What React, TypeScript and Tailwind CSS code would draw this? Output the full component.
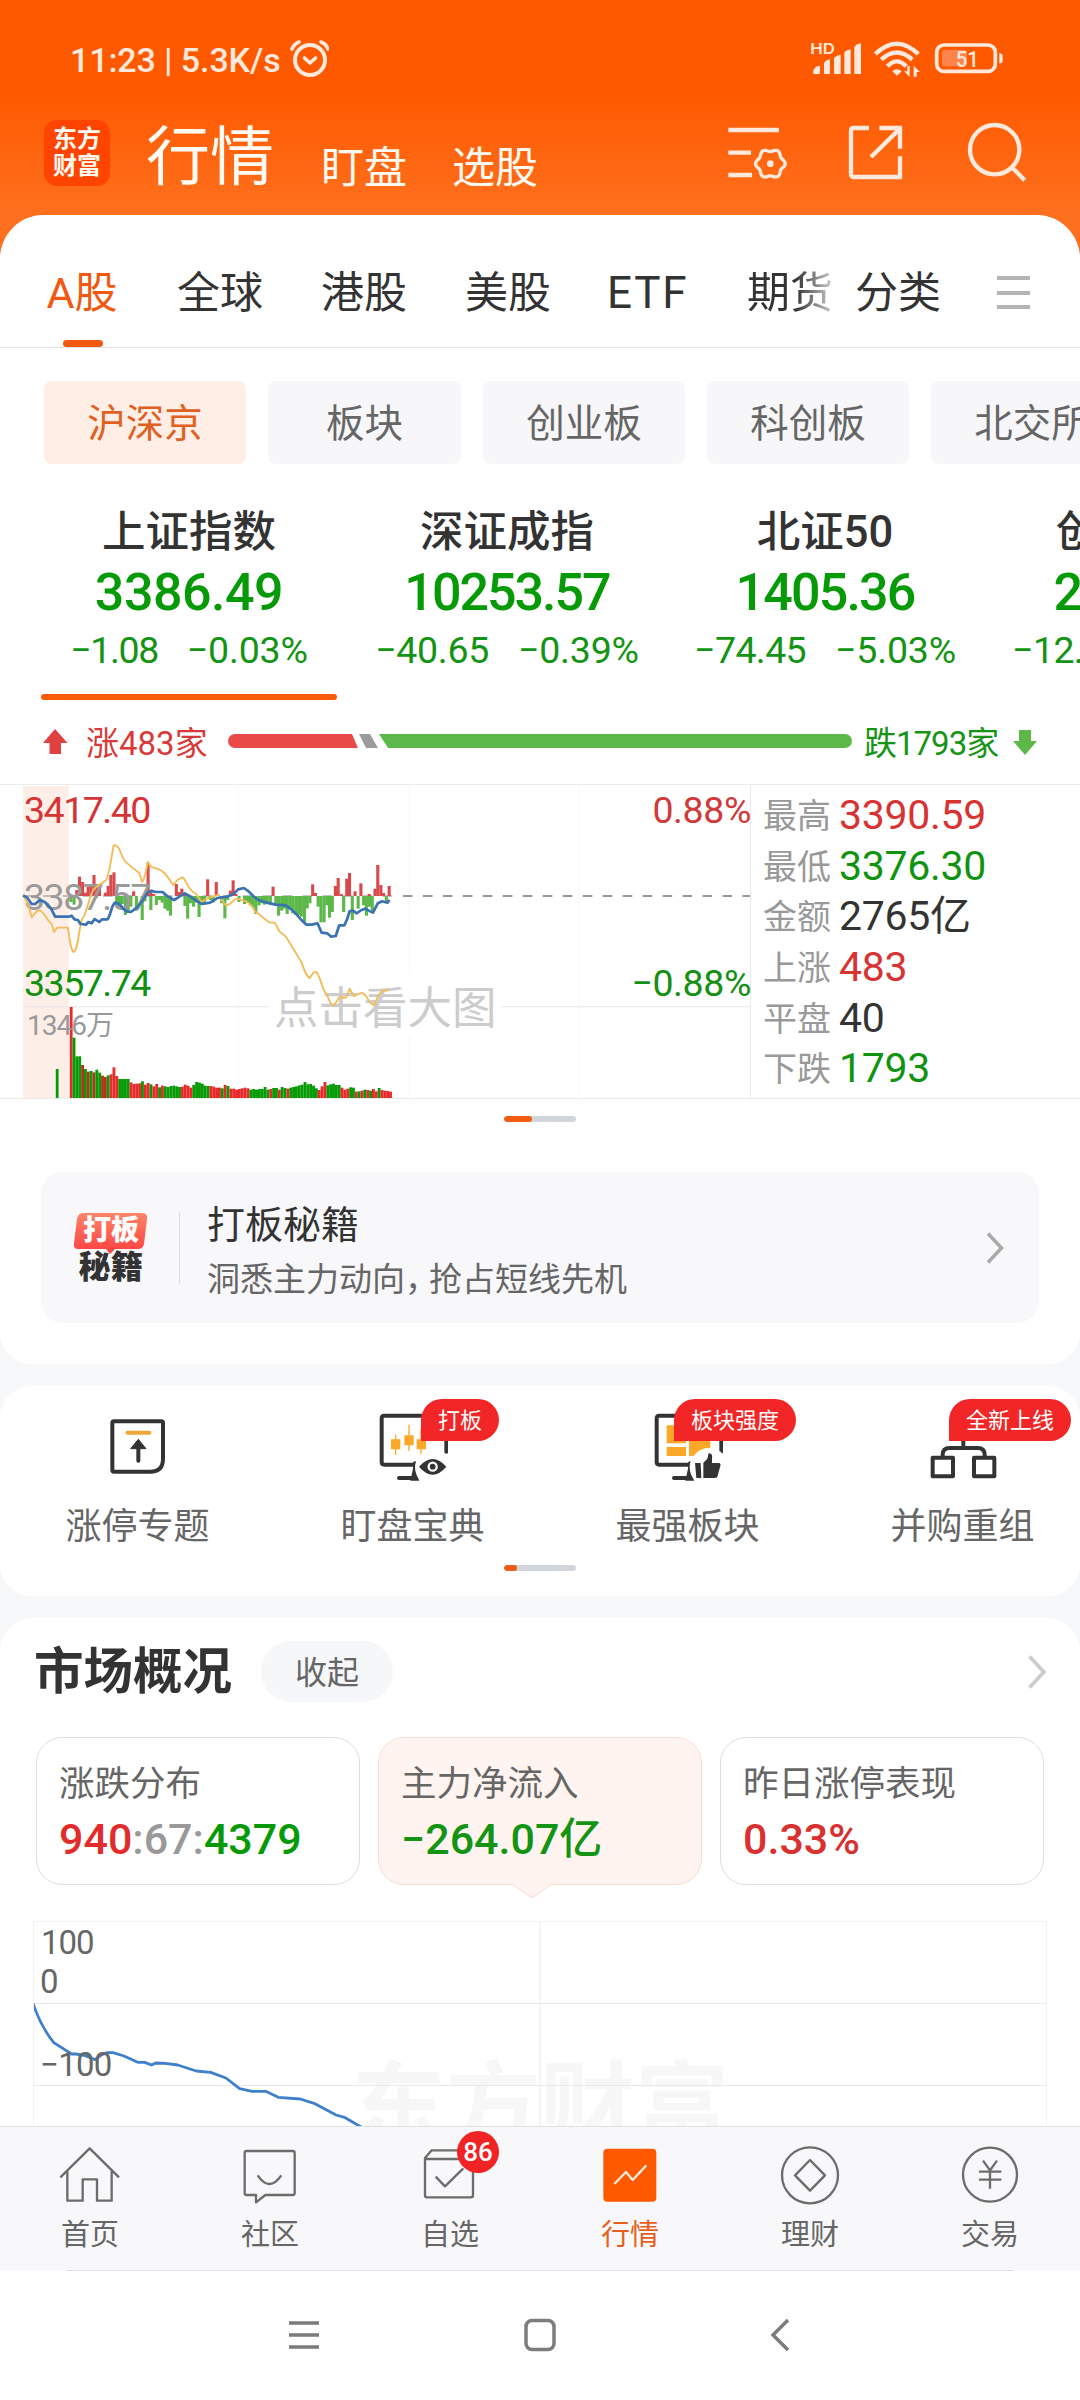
import React from 'react';

const CREAM = '#ffe9dc';

/* ---------- status bar ---------- */

function StatusBar() {
  return (
    <div className="flex h-[118px] items-start justify-between pl-[70px] pr-[74px] pt-[38px] text-[#ffe9dc]">
      <div className="flex h-[42px] items-center">
        <span className="mt-[2px] w-[217px] whitespace-nowrap text-[34px] font-medium leading-[42px] tracking-[-0.1px]">11:23 | 5.3K/s</span>
        <svg width="42" height="42" viewBox="0 0 42 42" fill="none" stroke={CREAM} strokeWidth="4" strokeLinecap="round" strokeLinejoin="round">
          <circle cx="23" cy="22" r="15" />
          <path d="M17.5 20l5.5 5 5.5-5" strokeWidth="3.6" />
          <path d="M5 11Q7 6 12 4M41 11Q39 6 34 4" strokeWidth="3.6" />
        </svg>
      </div>
      <svg className="mt-[1px]" width="196" height="40" viewBox="330 45 588 120" fill={CREAM}>
        <text x="331" y="90" fontSize="45" fontWeight="600" textLength="74" lengthAdjust="spacingAndGlyphs" fontFamily="Inter, sans-serif">HD</text>
        <path d="M340 150v-12l8-10 12-3v25zM372 150v-34l8-7 10-3v44zM402 150v-48l9-7 11-3v58zM433 150v-65l8-6 11-3v74zM463 150v-82l8-7 12-3v92z" />
        <g fill="none" stroke={CREAM} strokeWidth="13">
          <path d="M526 90Q590 28 655 90" />
          <path d="M544 107Q590 64 637 107" />
          <path d="M562 127Q590 97 619 127" />
        </g>
        <path d="M577 142q13-12 28 0l-14 13z" />
        <path d="M627 128v26l-10-10h7v-16zM643 156v-26l12 12h-7v14z" stroke={CREAM} strokeWidth="4" />
        <rect x="710" y="63" width="176" height="79" rx="22" fill="none" stroke={CREAM} strokeWidth="11" />
        <rect x="726" y="78" width="75" height="49" rx="8" fill="#ff834a" />
        <path d="M898 88q10 0 10 8v14q0 8-10 8z" />
        <text x="767" y="128" fontSize="67" fontWeight="500" textLength="70" lengthAdjust="spacingAndGlyphs" fontFamily="Roboto, sans-serif">51</text>
      </svg>
    </div>
  );
}

/* ---------- title bar ---------- */

// six-lobed outline of the settings gear
const GEAR = Array.from({ length: 72 }, (_, i) => {
  const a = (i * Math.PI) / 36;
  const r = 40.5 + 4 * Math.cos(6 * a);
  return `${i ? 'L' : 'M'}${(211 + r * Math.cos(a)).toFixed(1)} ${(416 + r * Math.sin(a)).toFixed(1)}`;
}).join('');

function TitleBar() {
  return (
    <div className="flex h-[97px] items-start pl-[44px] text-[#fffaf2]">
      <div className="mt-[2px] flex h-[66px] w-[66px] flex-col items-center justify-center rounded-[13px] bg-[#ff4400] text-[24px] font-bold leading-[27px]">
        <span className="h-[27px]">东方</span>
        <span className="h-[27px]">财富</span>
      </div>
      <span className="ml-[36px] w-[175px] whitespace-nowrap text-[64px] leading-[80px]">行情</span>
      <span className="mt-[20px] w-[131px] whitespace-nowrap text-[43px] leading-[60px]">盯盘</span>
      <span className="mt-[20px] whitespace-nowrap text-[43px] leading-[60px]">选股</span>
      <svg className="ml-auto mr-[40px]" width="320" height="70" viewBox="60 279 960 210" fill="none" stroke={CREAM} strokeWidth="13">
        <path d="M85 315H237M85 383H153M85 450H156" />
        <path d={GEAR + 'Z'} strokeWidth="10" />
        <circle cx="211" cy="416" r="10" fill={CREAM} stroke="none" />
        <path d="M507 309H461Q453 309 453 317V448Q453 456 461 456H600V394M538 309H600V371M513 396L600 311" />
        <circle cx="884" cy="374" r="74" />
        <path d="M936 427L974 466" />
      </svg>
    </div>
  );
}

/* ---------- tabs ---------- */

function MarketTabs() {
  return (
    <div className="flex h-[133px] border-b border-[#e2e2e2] pl-[45px] text-[43px] leading-[60px] text-[#333]">
      <div className="flex w-[132px] flex-col pt-[48px]">
        <span className="w-[74px] text-center text-[#f0590f]">A股</span>
        <span className="ml-[18px] mt-[17px] h-[7px] w-[40px] rounded-full bg-[#f0590f]" />
      </div>
      <span className="w-[144px] pt-[48px]">全球</span>
      <span className="w-[144px] pt-[48px]">港股</span>
      <span className="w-[142px] pt-[48px]">美股</span>
      <span className="w-[140px] pt-[48px] text-[44px] tracking-[1.8px]">ETF</span>
      <span className="w-[108px] bg-[linear-gradient(90deg,#333_45%,#fff_90%)] bg-clip-text pt-[48px] text-transparent">期货</span>
      <span className="w-[142px] pt-[48px]">分类</span>
      <div className="mt-[61px] flex h-[33px] w-[33px] flex-col justify-between">
        <span className="h-[4px] bg-[#b5b5b5]" />
        <span className="h-[4px] bg-[#b5b5b5]" />
        <span className="h-[4px] bg-[#b5b5b5]" />
      </div>
    </div>
  );
}

function Chips() {
  const base = 'flex h-[83px] shrink-0 items-center justify-center rounded-[8px] pt-[4px] text-[38.5px] leading-none';
  return (
    <div className="mt-[33px] flex gap-[22px] overflow-hidden pl-[44px]">
      <span className={base + ' w-[202px] bg-[#ffeee5] text-[#e0601f]'}>沪深京</span>
      <span className={base + ' w-[193px] bg-[#f7f7fa] text-[#666]'}>板块</span>
      <span className={base + ' w-[202px] bg-[#f7f7fa] text-[#666]'}>创业板</span>
      <span className={base + ' w-[202px] bg-[#f7f7fa] text-[#666]'}>科创板</span>
      <span className={base + ' w-[202px] bg-[#f7f7fa] text-[#666]'}>北交所</span>
    </div>
  );
}

/* ---------- index quotes ---------- */

const INDICES = [
  { name: '上证指数', price: '3386.49', diff: '−1.08', pct: '−0.03%', fit: 'tracking-[-0.5px]', diffFit: 'tracking-[-1.4px]' },
  { name: '深证成指', price: '10253.57', diff: '−40.65', pct: '−0.39%', fit: 'tracking-[-2px]', diffFit: 'tracking-[-0.3px]' },
  { name: '北证50', price: '1405.36', diff: '−74.45', pct: '−5.03%', fit: 'tracking-[-1.8px]', diffFit: 'tracking-[-0.6px]' },
  { name: '创业板指', price: '2034.16', diff: '−12.45', pct: '−0.60%', fit: 'tracking-[-1.8px]', diffFit: 'tracking-[-0.6px]' },
];

function Quotes() {
  return (
    <div className="flex h-[236px] overflow-hidden pl-[30px] pt-[42px]">
      {INDICES.map((q, i) => (
        <div key={q.name} className="flex w-[318px] shrink-0 flex-col items-center whitespace-nowrap">
          <span className="flex h-[53px] items-center text-[43.5px] font-medium leading-none text-[#333]">{q.name}</span>
          <span className={'flex h-[67px] items-center text-[52px] font-medium leading-none text-[#069a06] ' + q.fit}>{q.price}</span>
          <span className="flex h-[50px] items-center gap-[29px] text-[37.5px] leading-none text-[#149414]">
            <span className={q.diffFit}>{q.diff}</span>
            <span className="tracking-[-0.2px]">{q.pct}</span>
          </span>
          {i === 0 && <span className="mt-[18px] h-[6px] w-[296px] rounded-full bg-[#fa5a0a]" />}
        </div>
      ))}
    </div>
  );
}

function Breadth() {
  return (
    <div className="flex h-[84px] items-center text-[33px] leading-none">
      <svg className="ml-[42px]" width="26" height="26" viewBox="0 0 26 26" fill="#e04040">
        <path d="M13 0L25.500 14H19V25H7.500V14H1z" />
      </svg>
      <span className="ml-[18px] mt-[2px] w-[142px] whitespace-nowrap text-[#d83a3a]">涨483家</span>
      <svg className="-mt-[2px]" width="625" height="14" viewBox="0 0 625 14">
        <path d="M7 0H124L130 14H7A7 7 0 0 1 7 0z" fill="#e84a4a" />
        <path d="M131 0H142L150 14H138z" fill="#9b9b9b" />
        <path d="M151 0H617A7 7 0 0 1 617 14H160z" fill="#5cb848" />
      </svg>
      <span className="ml-[11px] mt-[2px] w-[148px] whitespace-nowrap tracking-[-1px] text-[#169416]">跌1793家</span>
      <svg width="26" height="26" viewBox="0 0 26 26" fill="#5cb848">
        <path d="M13 26L25 12H19V1H7V12H1z" />
      </svg>
    </div>
  );
}

/* ---------- intraday chart ---------- */

// [x, y] of each momentum bar's tip; the base line is y = 408
const UP_BARS: number[][] = [
  [223, 390], [231, 350], [240, 366], [248, 398], [256, 380], [264, 378], [273, 345], [281, 375], [289, 385],
  [306, 398], [314, 378], [322, 345], [331, 337], [388, 394], [430, 308], [438, 396], [446, 402], [512, 372], [520, 396], [528, 386],
  [537, 398], [603, 358], [628, 366], [669, 392], [677, 361], [685, 402], [793, 380], [908, 373], [916, 399],
  [974, 378], [982, 354], [991, 402], [1007, 356], [1015, 339], [1031, 394], [1048, 370], [1072, 402], [1089, 386],
  [1097, 315], [1106, 375], [1114, 399], [1130, 378],
];
const DOWN_BARS: number[][] = [
  [206, 426], [215, 434], [280, 414], [339, 436], [347, 440], [355, 432], [364, 465], [372, 458], [380, 440], [396, 452],
  [413, 480], [421, 424], [438, 450], [454, 435], [463, 420], [471, 428], [479, 446], [487, 452], [495, 467], [537, 438],
  [545, 476], [553, 430], [562, 440], [570, 428], [578, 471], [586, 430], [594, 434], [611, 420], [619, 428], [644, 430], [653, 475],
  [661, 420], [694, 426], [710, 432], [719, 426], [727, 436], [735, 442], [743, 462], [752, 436], [760, 430], [768, 434],
  [776, 430], [785, 434], [801, 436], [809, 467], [818, 452], [826, 446], [834, 462], [842, 446], [850, 460],
  [859, 465], [867, 465], [875, 470], [884, 487], [892, 445], [900, 430], [924, 440], [932, 487], [941, 487],
  [949, 436], [957, 473], [965, 456], [998, 456], [1023, 480], [1040, 446], [1056, 436], [1064, 467], [1073, 440],
  [1081, 458], [1122, 424],
];

const VOLUME_TOPS = [
  741, 833, 889, 889, 915, 927, 935, 933, 937, 929, 938, 947, 951, 946, 943, 922, 948, 957, 957, 957, 957, 967, 972, 971, 970,
  964, 974, 969, 973, 979, 972, 982, 977, 979, 981, 978, 977, 979, 981, 980, 974, 977, 983, 975, 966, 968, 971, 977, 978,
  978, 980, 983, 983, 985, 975, 978, 986, 986, 989, 987, 985, 983, 985, 989, 987, 989, 987, 987, 981, 989, 987, 984, 984,
  989, 981, 984, 986, 983, 981, 979, 976, 974, 966, 973, 972, 977, 985, 990, 979, 966, 976, 973, 971, 975, 975,
  983, 989, 986, 982, 983, 995, 994, 992, 989, 990, 992, 987, 994, 984, 990, 992, 993, 995,
];
const VOLUME_COLORS = 'RGGGRGRGRGGRRGRRRGGGGRRRRGRRGRRGRGGGGGGRRRRGGGGGGRRRRGRGRRRRRRRGGGGGGGRGGRGGRGGGGGGGGGGRRRGGGGGRRRGGRGRGRGRRGRRRR';

function IntradayChart() {
  return (
    <div className="relative h-full w-[751px] shrink-0 border-r border-[#e9e9e9]">
      <svg className="block" width="750" height="313" viewBox="0 0 750 313">
        <g transform="translate(0,-25) scale(.34437,.33333)">
          <rect x="67" y="78" width="133" height="937" fill="#feeee8" />
          <g stroke="#e6e6e6" strokeWidth="2.500" strokeDasharray="3 5">
            <path d="M692 78V1014M1189 78V645M1189 830V1014M1682 78V1014" />
          </g>
          <path d="M67 740H780M1456 740H2178" stroke="#e8e8e8" strokeWidth="3" />
          <path d="M67 408H1140" stroke="#888" strokeWidth="3" strokeDasharray="28 30" />
          <path d="M1170 408H2178" stroke="#777" strokeWidth="5" strokeDasharray="28 30" />
          {UP_BARS.map(([x, y], i) => (
            <rect key={i} x={x - 4.5} y={y} width="9" height={408 - y} fill="#d9494c" />
          ))}
          {DOWN_BARS.map(([x, y], i) => (
            <rect key={i} x={x - 4.5} y={408} width="9" height={y - 408} fill="#5cb848" />
          ))}
          <rect x="162" y="927" width="8" height="88" fill="#069a06" />
          {VOLUME_TOPS.map((y, i) => (
            <rect key={i} x={202.5 + i * 8.28} y={y} width="8.300" height={1015 - y} fill={VOLUME_COLORS[i] === 'G' ? '#069a06' : i < 14 && i > 0 ? '#b8321a' : '#e82a2a'} />
          ))}
        </g>
      </svg>
      <span className="absolute left-[274px] top-[191px] whitespace-nowrap text-[44.500px] leading-[66px] text-[#cccccc]">点击看大图</span>
      <span className="absolute left-[24px] top-[90px] text-[37.500px] leading-[44px] tracking-[-1.5px] text-[#9a9a9a]">3387.57</span>
      <span className="absolute left-[27px] top-[221px] whitespace-nowrap text-[28px] leading-[40px] tracking-[-1px] text-[#999]">1346万</span>
      <svg className="absolute left-0 top-0" width="750" height="313" viewBox="0 0 750 313" fill="none" strokeLinejoin="round">
        <g transform="translate(0,-25) scale(.34437,.33333)">
          <path stroke="#f2bc58" strokeWidth="5.500" d="M67 406C78 420 86 446 92 472C100 466 104 446 118 452C130 462 142 488 150 492L157 516L166 503H197C203 540 205 572 214 576C226 574 230 500 238 478C250 468 262 400 270 392C280 375 300 370 306 362C318 352 326 270 330 256C352 252 350 300 370 310C386 326 392 330 404 338L413 366C418 364 424 330 430 306L438 320L455 326C475 330 488 352 503 375L515 360L530 352C540 356 545 392 570 402L585 426L600 416L635 404L655 436C670 438 676 416 690 416C715 422 730 430 741 455C760 466 772 484 785 488L798 488L812 515L830 530C850 562 862 584 875 606C885 632 890 652 900 654C908 640 914 630 922 640C936 668 936 694 950 704C956 724 960 734 967 736C980 730 982 708 990 710C1004 720 1008 712 1015 686L1028 708L1052 698L1064 710C1074 730 1080 736 1087 735C1096 712 1100 700 1110 693L1130 690" />
          <path stroke="#3a72b4" strokeWidth="8" d="M67 406L78 412L92 432L102 432L116 420L130 426L148 445L160 470H200L208 467L216 478L226 480L234 492L250 494L256 486L266 490L275 477L288 486L296 478L312 478C322 466 324 432 334 428C342 430 350 430 357 446L368 454L380 456L398 442L414 422L428 398L440 392L452 396H472L488 410L505 420L515 414L536 400L550 408L565 418L585 432L610 428L632 414L660 410L680 400L692 388L708 384L722 394L735 408L750 420L775 428L800 434L830 436L846 448L860 462L875 480L890 494L905 494L922 490L934 518L950 520L962 530L975 528L985 496L1000 496L1008 478L1015 454L1025 452L1035 460L1050 450L1060 446L1075 454L1083 458L1097 430L1110 424L1125 428L1131 420" />
        </g>
      </svg>
      <span className="absolute left-[24px] top-[3px] text-[37.500px] leading-[44px] tracking-[-1.5px] text-[#d63434]">3417.40</span>
      <span className="absolute left-[24px] top-[176px] text-[37.500px] leading-[44px] tracking-[-1.5px] text-[#109010]">3357.74</span>
      <span className="absolute right-[-1px] top-[3px] text-[37.500px] leading-[44px] tracking-[-0.4px] text-[#d03a3a]">0.88%</span>
      <span className="absolute right-[-1px] top-[176px] text-[37.500px] leading-[44px] tracking-[-0.4px] text-[#168f16]">−0.88%</span>
    </div>
  );
}

const STATS = [
  { label: '最高', value: '3390.59', color: 'text-[#d83232]' },
  { label: '最低', value: '3376.30', color: 'text-[#109410]' },
  { label: '金额', value: '2765亿', color: 'text-[#333]' },
  { label: '上涨', value: '483', color: 'text-[#d83232]' },
  { label: '平盘', value: '40', color: 'text-[#333]' },
  { label: '下跌', value: '1793', color: 'text-[#109410]' },
];

function Pager({ active }: { active: string }) {
  return (
    <div className="mx-auto h-[6px] w-[72px] overflow-hidden rounded-full bg-[#d2d6da]">
      <div className={'h-full rounded-full bg-[#f25c12] ' + active} />
    </div>
  );
}

function Chevron({ className, color }: { className: string; color: string }) {
  return (
    <svg className={className} viewBox="0 0 18 32" fill="none" stroke={color} strokeWidth="3.500">
      <path d="M2 1.500L15.500 16L2 30.500" />
    </svg>
  );
}

function Promo() {
  return (
    <div className="mx-[41px] mt-[50px] flex h-[151px] items-center rounded-[22px] bg-[#f8f8fa] pl-[31px] pr-[35px]">
      <div className="relative flex h-[76px] w-[78px] flex-col items-center">
        <svg className="absolute left-0 top-0" width="78" height="46" viewBox="0 0 78 46">
          <defs>
            <linearGradient id="promo" x1="0" y1="0" x2="0" y2="1">
              <stop offset="0" stopColor="#fb8568" />
              <stop offset="1" stopColor="#fc3f40" />
            </linearGradient>
          </defs>
          <path d="M11 3H70Q76 3 75 9L72 34Q71 39 66 39H43L38 44L34 39H6Q1 39 2 33L5 9Q6 3 11 3z" fill="url(#promo)" />
        </svg>
        <span className="relative mt-[4px] h-[35px] text-[28px] font-black leading-[33px] text-white">打板</span>
        <span className="relative h-[34px] text-[32px] font-black leading-[37px] tracking-[0.5px] text-[#333]">秘籍</span>
      </div>
      <span className="ml-[29px] h-[72px] w-px bg-[#dcdcde]" />
      <div className="ml-[27px] flex flex-1 flex-col whitespace-nowrap pt-[10px]">
        <span className="text-[38px] leading-[54px] text-[#333]">打板秘籍</span>
        <span className="text-[33px] leading-[56px] text-[#666]">洞悉主力动向<span className="tracking-[-9px]">，</span>抢占短线先机</span>
      </div>
      <Chevron className="h-[32px] w-[18px]" color="#aaaaaa" />
    </div>
  );
}

/* ---------- shortcuts ---------- */

const DARK = '#333';
const AMBER = '#fba728';

function LimitUpIcon() {
  return (
    <svg width="70" height="70" viewBox="295 102 210 210" fill="none" stroke={DARK} strokeWidth="12">
      <path d="M328 127H470Q475 127 475 132V240Q475 278 437 278H328Q323 278 323 273V132Q323 127 328 127z" />
      <path d="M368 161H434" stroke="#eea83a" strokeLinecap="round" />
      <path d="M401 245V195" strokeLinecap="round" />
      <path d="M401 181L424 209H378z" fill={DARK} strokeWidth="3" strokeLinejoin="round" />
    </svg>
  );
}

function WatchIcon() {
  return (
    <svg width="70" height="70" viewBox="1093 99 210 210" fill="none" stroke={DARK} strokeWidth="12">
      <path d="M1204 254H1112Q1104 254 1104 246V115Q1104 107 1112 107H1290Q1298 107 1298 115V215M1204 250V294H1156" strokeLinecap="round" />
      <path d="M1199 262L1217 302H1190z" fill={DARK} stroke="none" />
      <path d="M1146 164V224M1186 134V213M1222 146V229" stroke={AMBER} strokeWidth="4" />
      <path d="M1132 178h28v30h-28zM1172 166h28v30h-28zM1209 178h28v30h-28z" fill={AMBER} stroke="none" />
      <circle cx="1258" cy="262" r="54" fill="#fff" stroke="none" />
      <path d="M1216 260Q1257 214 1298 260Q1257 308 1216 260z" fill={DARK} stroke="none" />
      <circle cx="1257" cy="260" r="12" stroke="#fff" strokeWidth="7" fill={DARK} />
    </svg>
  );
}

function SectorIcon() {
  return (
    <svg width="70" height="70" viewBox="323 99 210 210" fill="none" stroke={DARK} strokeWidth="12">
      <path d="M434 254H342Q334 254 334 246V115Q334 107 342 107H520Q528 107 528 115V215M434 250V294H386" strokeLinecap="round" />
      <path d="M429 262L447 302H420z" fill={DARK} stroke="none" />
      <path d="M364 136h58v54h-58zM364 201h58v27h-58zM431 136h64v92h-64z" fill={AMBER} stroke="none" />
      <circle cx="491" cy="262" r="58" fill="#fff" stroke="none" />
      <path d="M449 249H466L468 294H453zM474 248L486 236L490 220Q503 218 500 238V249H520Q527 249 525 258L516 290Q515 294 508 294H474z" fill={DARK} stroke="none" />
    </svg>
  );
}

function MergeIcon() {
  return (
    <svg width="70" height="70" viewBox="1125 99 210 210" fill="none" stroke={DARK} strokeWidth="12">
      <path d="M1139 233h61v56h-61zM1263 233h61v56h-61z" strokeLinejoin="round" />
      <path d="M1169 232V224Q1169 204 1190 204H1274Q1295 204 1295 224V232M1231 180V204" />
    </svg>
  );
}

const SHORTCUTS = [
  { label: '涨停专题', badge: '', Icon: LimitUpIcon, badgeBox: '' },
  { label: '盯盘宝典', badge: '打板', Icon: WatchIcon, badgeBox: 'left-[146px] w-[78px]' },
  { label: '最强板块', badge: '板块强度', Icon: SectorIcon, badgeBox: 'left-[124px] w-[122px]' },
  { label: '并购重组', badge: '全新上线', Icon: MergeIcon, badgeBox: 'left-[124px] w-[122px]' },
];

function Shortcuts() {
  return (
    <div className="mt-[22px] h-[210px] shrink-0 overflow-hidden rounded-[32px] bg-white pt-[27px]">
      <div className="flex">
        {SHORTCUTS.map(({ label, badge, Icon, badgeBox }) => (
          <div key={label} className="relative flex w-[275px] shrink-0 flex-col items-center">
            <Icon />
            <span className="mt-[17px] text-[36px] leading-[54px] text-[#666]">{label}</span>
            {badge && (
              <span className={'absolute top-[-14px] h-[42px] rounded-[21px] rounded-bl-none bg-[#f22626] text-center text-[22px] leading-[43px] text-white ' + badgeBox}>
                {badge}
              </span>
            )}
          </div>
        ))}
      </div>
      <div className="mt-[11px]">
        <Pager active="w-[13px]" />
      </div>
    </div>
  );
}

/* ---------- market overview ---------- */

function Overview() {
  return (
    <div className="relative mt-[22px] flex flex-1 flex-col overflow-hidden rounded-t-[34px] bg-white">
      <div className="flex h-[107px] items-center pl-[34px] pr-[33px]">
        <span className="w-[227px] whitespace-nowrap pt-[3px] text-[49.500px] font-bold leading-none text-[#333]">市场概况</span>
        <span className="flex h-[61px] w-[132px] items-center justify-center rounded-full bg-[#f6f7f9] pt-[2px] text-[32px] leading-none text-[#666]">收起</span>
        <Chevron className="ml-auto h-[34px] w-[20px]" color="#cccccc" />
      </div>
      <div className="mt-[12px] flex gap-[18px] pl-[36px]">
        <div className="flex h-[148px] w-[324px] flex-col rounded-[26px] border border-[#dfdfdf] pl-[22px] pt-[19px]">
          <span className="text-[35.500px] leading-[54px] text-[#666]">涨跌分布</span>
          <span className="text-[43px] font-medium leading-[56px] text-[#069a06]">
            <span className="text-[#e22c2c]">940</span>
            <span className="text-[#999]">:67:</span>4379
          </span>
        </div>
        <div className="relative flex h-[148px] w-[324px] flex-col rounded-[26px] border border-[#f9ddcf] bg-[#fff4ef] pl-[22px] pt-[19px]">
          <span className="text-[35.500px] leading-[54px] text-[#666]">主力净流入</span>
          <span className="text-[43px] font-medium leading-[56px] text-[#149414]">−264.07亿</span>
          <svg className="absolute left-[133px] top-[144px]" width="40" height="18" viewBox="0 0 40 18">
            <path d="M1 1.500L17 14Q20 16.500 23 14L39 1.500V0H1z" fill="#fff4ef" />
            <path d="M1 2.500L17 14Q20 16.500 23 14L39 2.500" fill="none" stroke="#f9ddcf" strokeWidth="1" />
          </svg>
        </div>
        <div className="flex h-[148px] w-[324px] flex-col rounded-[26px] border border-[#dfdfdf] pl-[22px] pt-[19px]">
          <span className="text-[35.500px] leading-[54px] text-[#666]">昨日涨停表现</span>
          <span className="text-[43px] font-medium leading-[56px] text-[#d93030]">0.33%</span>
        </div>
      </div>
      <div className="relative ml-[33px] mt-[36px] h-[205px] w-[1014px] shrink-0 overflow-hidden border-x border-t border-[#f2f2f2]">
        <span className="absolute left-[317px] top-[127px] whitespace-nowrap text-[95px] font-bold leading-[120px] tracking-[-0.5px] text-[#f7f7f7]">东方财富</span>
        <svg className="absolute left-[-1px] top-[-1px]" width="1014" height="205" viewBox="0 0 1014 205" fill="none">
          <path d="M507 0V205" stroke="#f5f5f5" strokeWidth="2" />
          <path d="M0 82.500H1014M0 164.500H1014" stroke="#e9e9e9" strokeWidth="1" />
          <g transform="translate(-33,-21) scale(.6887,.33333)">
            <path vectorEffect="non-scaling-stroke" stroke="#3f80cc" strokeWidth="2.800" strokeLinejoin="round" d="M48 310Q58 375 78 428L104 462H110L124 467L138 479L148 464L156 458H164L180 468L200 487H210L220 495L226 489L240 490L258 495L285 513L306 517L328 534L348 566L366 574H386L404 592L436 597L456 610L488 645L500 652L526 683" />
          </g>
        </svg>
        <span className="absolute left-[7px] top-[1px] text-[33px] leading-[40px] tracking-[-1px] text-[#666]">100</span>
        <span className="absolute left-[6px] top-[40px] text-[33px] leading-[40px] text-[#666]">0</span>
        <span className="absolute left-[6px] top-[123px] text-[33px] leading-[40px] tracking-[-0.7px] text-[#666]">−100</span>
      </div>
    </div>
  );
}

/* ---------- bottom navigation ---------- */

const NAV = [
  {
    label: '首页',
    icon: <path d="M61 158L149 71L237 158M82 140V228H128V164H171V228H215V140" />,
    box: '57 55 189 189',
  },
  {
    label: '社区',
    icon: <path d="M619 79H758Q764 79 764 85V205Q764 211 758 211H676L648 233V211H619Q614 211 614 205V85Q614 79 619 79zM653 152Q688 204 724 152" />,
    box: '597 55 189 189',
  },
  {
    label: '自选',
    icon: <path d="M1155 103H1299V212Q1299 218 1293 218H1161Q1155 218 1155 212V100L1175 77H1280M1187 156L1215 185L1270 131" />,
    box: '1137 55 189 189',
  },
  {
    label: '行情',
    icon: (
      <>
        <rect x="1674" y="72" width="159" height="159" rx="12" fill="#ff5900" stroke="none" />
        <path d="M1707 178L1742 142L1762 166L1803 122" stroke="#ffeade" />
      </>
    ),
    box: '1661 55 189 189',
  },
  {
    label: '理财',
    icon: (
      <>
        <circle cx="2301" cy="152" r="84" />
        <path d="M2301 106L2346 152L2301 198L2256 152z" />
      </>
    ),
    box: '2208 55 189 189',
  },
  {
    label: '交易',
    icon: (
      <>
        <circle cx="2841" cy="150" r="81" />
        <path d="M2820 108L2841 137L2862 108M2841 137V192M2808 141H2875M2808 165H2875" />
      </>
    ),
    box: '2748 55 189 189',
  },
];

function BottomNav() {
  return (
    <div className="flex h-[144px] border-t border-[#dfe0e2] bg-[#f8f8fa]">
      {NAV.map((n, i) => (
        <div key={n.label} className="relative flex w-[180px] flex-col items-center pt-[16px]">
          <svg width="63" height="63" viewBox={n.box} fill="none" stroke="#6c6c6c" strokeWidth="7" strokeLinejoin="round">
            {n.icon}
          </svg>
          <span className={'mt-[7px] text-[29px] leading-[44px] ' + (i === 3 ? 'text-[#e5601c]' : 'text-[#666]')}>{n.label}</span>
          {i === 2 && (
            <span className="absolute left-[97px] top-[4px] h-[42px] w-[42px] rounded-full bg-[#f02424] text-center text-[26px] font-medium leading-[42px] text-white">86</span>
          )}
        </div>
      ))}
    </div>
  );
}

function SystemNav() {
  return (
    <div className="flex h-[130px] flex-col bg-[#fefefe]">
      <div className="mx-[66px] h-px bg-[#e2e2e4]" />
      <svg className="ml-[270px] mt-[39px]" width="540" height="50" viewBox="270 2310 540 50" fill="none" stroke="#7c7c7c" strokeWidth="3.500">
        <path d="M289 2323H319M289 2335H319M289 2347H319" />
        <rect x="526" y="2320.500" width="28" height="29" rx="6" />
        <path d="M788 2320L773 2335L788 2350" />
      </svg>
    </div>
  );
}

export default function App() {
  return (
    <div className="flex h-[2400px] w-[1080px] flex-col overflow-hidden bg-[linear-gradient(180deg,#ff5900_0px,#ff5900_90px,#ff701e_215px,#ff701e_300px)] font-['Roboto','Noto_Sans_CJK_SC',sans-serif]">
      <StatusBar />
      <TitleBar />
      <div className="flex min-h-0 flex-1 flex-col overflow-hidden rounded-t-[44px] bg-[#f7f8fa]">
        <div className="h-[1149px] shrink-0 rounded-b-[32px] bg-white">
          <MarketTabs />
          <Chips />
          <Quotes />
          <Breadth />
          <div className="flex h-[315px] border-y border-[#ebebeb]">
            <IntradayChart />
            <div className="flex flex-col pl-[12px] pt-[5px]">
              {STATS.map((s) => (
                <div key={s.label} className="flex h-[50.600px] items-center whitespace-nowrap">
                  <span className="w-[76px] pt-[2px] text-[34px] leading-[50px] text-[#999]">{s.label}</span>
                  <span className={'text-[41px] leading-[50px] tracking-[-0.3px] ' + s.color}>{s.value}</span>
                </div>
              ))}
            </div>
          </div>
          <div className="mt-[17px]">
            <Pager active="w-[28px]" />
          </div>
          <Promo />
        </div>
        <Shortcuts />
        <Overview />
      </div>
      <BottomNav />
      <SystemNav />
    </div>
  );
}
